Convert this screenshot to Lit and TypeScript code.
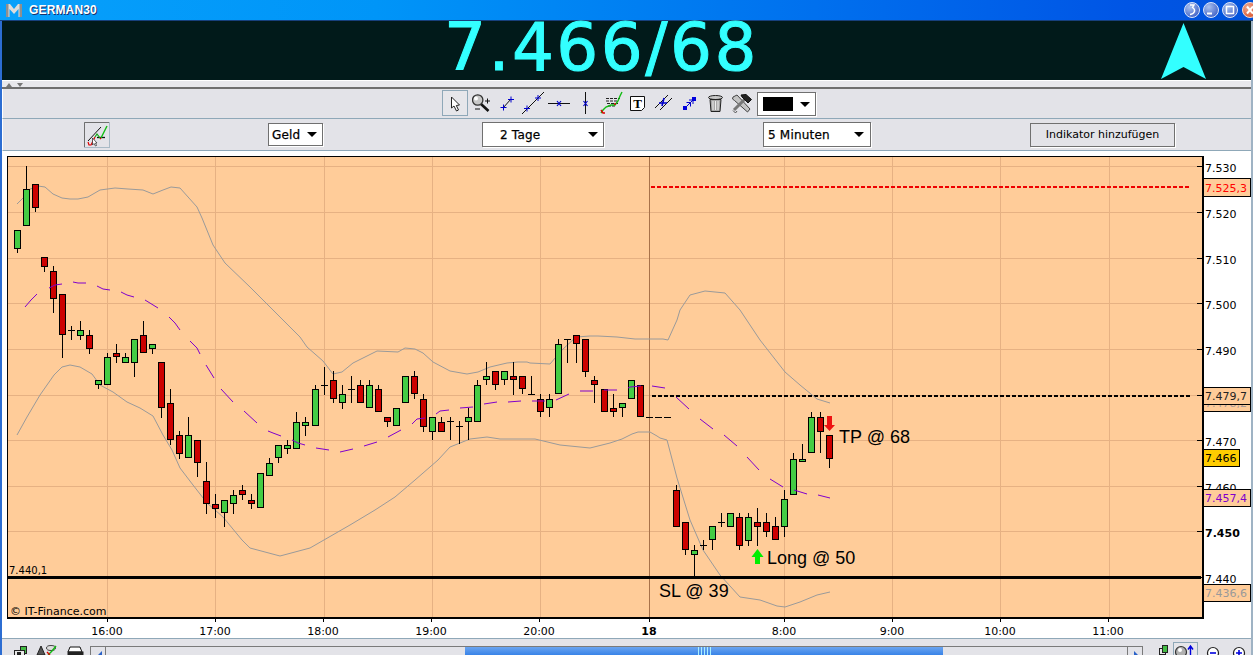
import { LitElement, html, css, svg } from "lit";
import { customElement } from "lit/decorators.js";

type C = [number, "g" | "r" | "d", number, number, number, number];
const CANDLES: C[] = [
  [0,"g",230,249,0,253],[1,"g",189,226,166,0],[2,"r",184,208,0,212],[3,"r",257,267,0,272],
  [4,"r",271,299,266,313],[5,"r",294,335,0,358],[6,"d",330,330,326,340],[7,"g",330,336,321,340],
  [8,"r",335,349,330,354],[9,"g",380,385,0,389],[10,"g",357,385,353,0],[11,"r",353,357,344,363],
  [12,"g",357,363,353,0],[13,"g",339,363,0,377],[14,"r",335,353,321,0],[15,"g",344,349,0,354],
  [16,"r",362,408,0,418],[17,"r",403,440,389,445],[18,"r",435,454,431,459],[19,"g",435,458,417,0],
  [20,"r",440,463,0,477],[21,"r",481,504,462,514],[22,"r",504,509,494,518],[23,"g",500,513,0,527],
  [24,"g",495,504,490,514],[25,"r",490,495,485,500],[26,"r",500,504,494,509],[27,"g",473,508,0,0],
  [28,"g",463,476,458,0],[29,"g",445,458,0,463],[30,"g",445,449,440,454],[31,"g",422,449,412,0],
  [32,"g",422,426,417,436],[33,"g",389,426,385,0],[34,"d",385,385,367,395],[35,"r",380,399,371,403],
  [36,"g",394,403,385,409],[37,"d",389,389,376,403],[38,"r",385,403,380,0],[39,"g",385,408,380,0],
  [40,"r",389,412,385,0],[41,"r",417,422,0,427],[42,"g",408,426,0,0],[43,"g",376,403,0,0],
  [44,"r",376,394,371,399],[45,"r",399,427,394,432],[46,"g",417,432,0,440],[47,"r",422,432,417,0],
  [48,"d",421,421,417,440],[49,"d",426,426,421,444],[50,"g",417,422,408,440],[51,"g",385,422,380,0],
  [52,"g",376,380,362,385],[53,"r",371,385,0,390],[54,"g",371,380,0,385],[55,"r",376,380,362,395],
  [56,"r",376,389,0,394],[57,"d",394,394,376,0],[58,"r",399,412,394,417],[59,"g",399,408,394,417],
  [60,"g",344,394,339,0],[61,"d",339,339,0,363],[62,"r",335,344,0,363],[63,"r",339,372,0,377],
  [64,"r",380,385,376,403],[65,"r",389,412,0,0],[66,"r",408,412,394,417],[67,"g",403,408,0,417],
  [68,"g",380,399,0,0],[69,"r",385,417,0,0],[70,"d",417,417,0,0],[71,"d",417,417,0,0],
  [72,"d",417,417,0,0],[73,"r",490,527,485,0],[74,"r",522,550,0,555],[75,"g",550,555,545,577],
  [76,"d",545,545,540,550],[77,"g",526,540,0,550],[78,"d",522,522,513,527],[79,"g",513,527,0,0],
  [80,"r",517,546,513,550],[81,"g",517,541,513,546],[82,"r",522,527,508,546],[83,"r",522,532,513,537],
  [84,"r",526,540,517,0],[85,"g",499,527,490,537],[86,"g",459,495,453,0],[87,"g",459,462,444,0],
  [88,"g",417,453,412,0],[89,"r",417,432,412,453],[90,"r",435,459,0,468],
];
const cx = (i: number) => (i < 33 ? 17 : i < 65 ? 18 : 19) + 9 * i + 0.5;

const PURPLE = [
  "25,307 31,300 37,294","49,288 55,285 62,284","73,282 78,283 86,283","97,286 103,289 110,290",
  "121,292 127,295 134,297","145,300 158,308","169,317 175,323 180,330","190,341 197,348 200,354",
  "206,365 214,378","221,389 233,402","244,411 257,423","268,431 273,433 281,436","292,440 298,443 305,445",
  "316,448 329,450","340,452 353,449","364,446 377,442","388,437 401,430","412,424 417,419 425,418",
  "436,414 440,411 449,410","460,408 473,407","484,404 497,402","508,402 521,401","532,401 545,401",
  "556,400 569,394","580,391 593,391","604,390 617,390","628,388 630,387 641,386","652,386 665,388",
  "676,397 689,409","700,419 713,429","724,435 737,446","747,457 759,470","770,479 783,487",
  "794,490 807,494","818,495 830,498",
];
const UPPER = "17,204 24,197 28,190 33,188 38,186 45,187 53,194 62,198 70,199 78,199 88,197 100,190 115,188 128,189 143,190 153,194 163,190 171,187 180,188 197,207 202,218 213,245 225,263 250,287 283,320 300,337 307,347 323,361 333,374 342,372 353,363 363,358 377,351 398,352 405,348 415,349 423,353 433,362 450,371 467,374 478,372 490,367 507,363 518,362 527,362 530,363 550,364 562,350 576,337 590,336 598,336 617,337 635,339 663,339 668,340 677,320 680,310 690,295 705,291 725,293 740,310 760,340 785,372 800,385 817,399 830,403";
const LOWER = "17,435 27,417 40,395 54,375 62,367 70,365 80,367 92,374 100,385 113,392 127,402 140,408 153,416 163,435 172,450 180,468 193,485 207,503 223,517 242,540 250,548 280,556 310,548 350,525 375,510 395,497 415,480 438,460 450,447 470,439 487,437 500,439 535,439 560,445 590,448 610,443 622,439 632,434 638,432 650,432 657,436 660,438 667,440 677,478 690,520 703,550 720,575 740,597 760,600 777,606 785,607 800,602 817,595 830,592";

const V_GRID = [107, 215, 324, 432, 540, 784, 892, 1000, 1109];
const H_GRID = [166, 212, 258, 303, 349, 395, 440, 486, 531, 577];
const Y_LABELS: [string, number, boolean][] = [
  ["7.530",166,false],["7.520",212,false],["7.510",258,false],["7.500",303,false],["7.490",349,false],
  ["7.470",440,false],["7.460",486,false],["7.450",531,true],["7.440",577,false],
];
const X_LABELS: [string, number, boolean][] = [
  ["16:00",107,false],["17:00",215,false],["18:00",323,false],["19:00",431,false],["20:00",539,false],
  ["18",649,true],["8:00",784,false],["9:00",892,false],["10:00",1000,false],["11:00",1108,false],
];
const BOXES: [string, number, number, number, string, string][] = [
  ["7.525,3",178,19,47,"#ff0000","#ffcc99"],
  ["7.478,2",392,20,47,"#a99a9a","#ffcc99"],
  ["7.479,7",387,18,47,"#222222","#ffcc99"],
  ["7.466",449,18,36,"#000000","#ffcc00"],
  ["7.457,4",489,18,47,"#8000cc","#ffcc99"],
  ["7.436,6",584,18,47,"#999999","#ffcc99"],
];

const cell = (x: number, w: number, body: unknown) =>
  html`<svg class="cell" width=${w} height="28" viewBox="${x} 90 ${w} 28">${body}</svg>`;
const blueCross = (x: number, y: number) =>
  svg`<path d="M${x - 3} ${y}H${x + 3}M${x} ${y - 3}V${y + 3}" stroke="#0000cc" stroke-width="1" fill="none"/>`;

const TOOLS = [
  cell(442, 30, svg`<rect x="442.5" y="90.5" width="25" height="25" fill="#e6e6ea" stroke="#8fa8b8"/>
    <path d="M451.5 97V108L454 106L456.5 111L458.5 110L456.3 105.5L459.5 105Z" fill="#fff" stroke="#222" stroke-width="1"/>`),
  cell(472, 25, svg`<path d="M481 104L488.5 111" stroke="#111" stroke-width="2.6"/>
    <circle cx="477.7" cy="100" r="5.2" fill="#c8c8c8" stroke="#333" stroke-width="1.3"/>
    <circle cx="476" cy="98.5" r="2" fill="#fff"/>
    <path d="M485 101H490M487.5 98.5V103.5M475 109H480" stroke="#111" fill="none"/>`),
  cell(497, 23, svg`<path d="M503 108L511 99" stroke="#111"/>${blueCross(503.5, 107.5)}${blueCross(511, 99.5)}`),
  cell(520, 26, svg`<path d="M522 114L544 92" stroke="#111"/>${blueCross(527, 108.5)}${blueCross(538, 98)}`),
  cell(546, 28, svg`<path d="M548 103.5H570" stroke="#111"/><path d="M557 101L561 106M561 101L557 106" stroke="#0000cc" stroke-width="1.2"/>`),
  cell(574, 24, svg`<path d="M585.5 92V114" stroke="#111"/><path d="M583.5 101L587.5 106M587.5 101L583.5 106" stroke="#0000cc" stroke-width="1.2"/>`),
  cell(598, 29, svg`<path d="M606 98.5H620M606 101H617M607 103.5H618M608 106H616" stroke="#222" stroke-dasharray="3 1" fill="none"/>
    <path d="M601 113L603 110L606 107L611 105L615 105L618 101L620 96L622 92" stroke="#11bb11" stroke-width="1.4" fill="none"/>
    <path d="M601 110L603 113L605 113" stroke="#dd0000" stroke-width="1.4" fill="none"/><circle cx="615" cy="104" r="1" fill="#dd0000"/>`),
  cell(627, 25, svg`<path d="M630.5 96.5H644.5V107.5L641.5 110.5H630.5Z" fill="#fff" stroke="#111"/>
    <text class="tglyph" x="637.5" y="107.5" text-anchor="middle">T</text>`),
  cell(652, 28, svg`<path d="M655 108L668 95M660 110L672 98" stroke="#111"/>
    <path d="M659 103L667 103M664 98L662 106" stroke="#0000cc" stroke-width="1.6"/>`),
  cell(680, 25, svg`<rect x="683" y="106" width="4" height="4" fill="#0000dd"/><rect x="692" y="97" width="4" height="4" fill="#0000dd"/>
    <path d="M687 106L692 101M686.5 102.5H690.5V106.5M689 100H693V104" stroke="#0000cc" fill="none"/>`),
  cell(705, 25, svg`<ellipse cx="715.5" cy="97.5" rx="7" ry="2" fill="#c8c8c8" stroke="#222"/>
    <path d="M710 99.5L711 111.5H720L721 99.5Z" fill="#a8a8a8" stroke="#222"/>
    <path d="M713 101V110M715.5 101V110M718 101V110" stroke="#eee"/>`),
  cell(730, 27, svg`<path d="M733 97L737 95L750 109L747.5 112L734.5 100.5L732.5 99Z" fill="#c4c4c4" stroke="#444"/>
    <path d="M734 110L746 98" stroke="#777" stroke-width="3"/>
    <path d="M741 95L746 94.5L751.5 99.5L748 103L742 97Z" fill="#222" stroke="#111"/>
    <path d="M733 110.5L735.5 113L737 111" stroke="#555" fill="none"/>`),
];

const CHART_ICON = html`<svg class="rowicon" width="26" height="26" viewBox="84 122 26 26">
  <rect x="84.5" y="122.5" width="25" height="25" fill="#e3e3e8" stroke="#a9bac6"/>
  <path d="M84.5 147V122.5H109" stroke="#6f6f6f" fill="none"/>
  <path d="M88 141L101 127" stroke="#111"/>
  <path d="M97 137.5H105" stroke="#111" stroke-width="1.3"/>
  <path d="M88 142L89 145L91 145L93 141L95 137" stroke="#e00000" stroke-width="1.2" fill="none"/>
  <path d="M95 137L97 134L100 138" stroke="#11aa11" stroke-width="1.2" fill="none"/>
  <path d="M100 138L101 139" stroke="#e00000" stroke-width="1.2"/>
  <path d="M101 138L103 134L105 130L107 126" stroke="#11bb11" stroke-width="1.4" fill="none"/>
  <path d="M92.5 138V145L94 143.5L95.5 146L96.5 145.5L95.5 143H97Z" fill="#fff" stroke="#222" stroke-width=".7"/>
</svg>`;

@customElement("app-root")
export class AppRoot extends LitElement {
  static styles = css`
    :host { display: block; width: 1253px; height: 655px; overflow: hidden; background: #fff;
      font-family: "DejaVu Sans", sans-serif; color: #000; }
    .title { height: 21px; box-sizing: border-box; border-bottom: 1px solid #17407c; display: flex; align-items: center;
      background: linear-gradient(90deg, #07a0fb 0%, #0095f8 30%, #0070ee 65%, #0055e5 90%, #0052dc 100%); }
    .logo { margin-left: 6px; flex: none; }
    .name { margin-left: 7px; font: bold 12px "Liberation Sans", sans-serif; letter-spacing: .15px; color: #fff;
      text-shadow: 1px 1px 0 #17306a; flex: 1; }
    .winbtns { flex: none; display: block; }
    .body { border-left: 2px solid #2c6dd2; border-right: 2px solid #9fb3c4; display: flex; flex-direction: column; height: 634px; }
    .panel { position: relative; height: 59px; background: #011a1a; display: flex; justify-content: center; align-items: flex-start; }
    .price { font-size: 66px; line-height: 54px; letter-spacing: 2.5px; -webkit-text-stroke: 1px #33ffff; color: #33ffff; margin-left: -50px; white-space: nowrap; }
    .arrow { position: absolute; left: 1159px; top: 0; }
    .split { border-top: 1px solid #fff; border-bottom: 2px solid #6f6f6f; background: #e8e8ec; display: flex; gap: 5px;
      padding: 2px 0 0 4px; box-sizing: content-box; height: 4px; }
    .up { width: 0; height: 0; border: 3.5px solid transparent; border-top: 0; border-bottom: 4px solid #777; }
    .down { width: 0; height: 0; border: 3px solid transparent; border-bottom: 0; border-top: 4px solid #777; }
    .tools { background: #e3e3e8; border-bottom: 1px solid #8fa8b8; border-left: 1px solid #fff; display: flex;
      align-items: flex-start; padding: 1px 0 0 439px; box-sizing: content-box; height: 28px; }
    .cell { display: block; flex: none; }
    .tglyph { font: bold 13px "Liberation Serif", serif; fill: #000; }
    .swatchsel { margin-top: 2px; width: 59px; height: 24px; box-sizing: border-box; background: #fff; border: 1px solid #707070;
      box-shadow: 1px 1px 0 #fff; display: flex; align-items: center; justify-content: space-between; padding: 0 5px; flex: none; }
    .swatch { width: 30px; height: 14px; background: #000; }
    .opts { height: 31px; background: #e3e3e8; border-bottom: 1px solid #8fa8b8; border-left: 1px solid #fff; display: flex;
      align-items: center; gap: 159px; padding-left: 81px; }
    .rowicon { display: block; flex: none; margin-right: -1px; }
    .sel { box-sizing: border-box; height: 25px; background: #fff; border: 1px solid #707070; box-shadow: 1px 1px 0 #fff; display: flex;
      align-items: center; justify-content: space-between; font-size: 12px; letter-spacing: .2px; -webkit-text-stroke: .25px #000; padding: 0 5px 0 3px; flex: none; }
    .geld { width: 55px; height: 23px; }
    .tage { width: 122px; padding-left: 17px; }
    .minuten { width: 108px; padding-right: 6px; padding-left: 4px; }
    .tri { width: 0; height: 0; border: 5px solid transparent; border-bottom: 0; border-top: 5px solid #000; }
    .add { box-sizing: border-box; width: 145px; height: 24px; background: #e3e3e8; border: 1px solid #707070; box-shadow: 1px 1px 0 #fff;
      font: 11px "DejaVu Sans", sans-serif; padding: 0; color: #000; flex: none; }
    .chart { display: block; flex: none; background: #fff; }
    .chart text { font: 11px "DejaVu Sans", sans-serif; fill: #000; }
    .chart text.b { font-weight: bold; }
    .chart text.note { font: 18px "Liberation Sans", sans-serif; }
    .chart text.small { font-size: 10px; }
    .bottom { height: 16px; border-top: 1px solid #8fa8b8; background: #e3e3e8; display: flex; overflow: hidden; flex: none; }
    .bottom svg { display: block; flex: none; }
    .scroll { margin-top: 7px; width: 1053px; height: 20px; flex: none; box-sizing: border-box; border-top: 1px solid #7a7a7a; display: flex; }
    .sbtn { width: 16px; flex: none; box-sizing: border-box; border-left: 1px solid #7a7a7a; border-right: 1px solid #7a7a7a; position: relative; }
    .sbtn::after { content: ""; position: absolute; left: 6px; top: 4px; border: 5px solid transparent; }
    .sbtn.l::after { border-left: 0; border-right: 5px solid #2a62c8; }
    .sbtn.r::after { border-right: 0; border-left: 5px solid #2a62c8; }
    .track { flex: 1; display: flex; padding-left: 359px; }
    .thumb { width: 478px; background: linear-gradient(#6aa4f0, #2f7de6 50%, #2a6fd8); display: flex; justify-content: center; gap: 2px; }
    .thumb i { width: 1px; height: 20px; background: #a8f0ff; }
  `;

  private candle(c: C) {
    const [i, k, t, b, wt, wb] = c;
    const x = cx(i);
    const parts = [];
    if (k === "d") {
      const y = t + 0.5;
      parts.push(svg`<path d="M${x - 3.5} ${y}H${x + 3.5}" stroke="#000"/>`);
      if (wt || wb) parts.push(svg`<path d="M${x} ${wt || t}V${wb || t}" stroke="#000"/>`);
      return parts;
    }
    if (wt) parts.push(svg`<path d="M${x} ${wt}V${t}" stroke="#000"/>`);
    if (wb) parts.push(svg`<path d="M${x} ${b}V${wb}" stroke="#000"/>`);
    parts.push(svg`<rect x=${x - 3} y=${t + 0.5} width="6" height=${b - t - 1} fill=${k === "g" ? "#44cc44" : "#cc0000"} stroke="#000"/>`);
    return parts;
  }

  render() {
    return html`
      <div class="title">
        <svg class="logo" width="16" height="13" viewBox="0 0 16 13">
          <path d="M0 0H4L8 5L12 0H16V13H12.5V5L8 10L3.5 5V13H0Z" fill="#dcdcdc"/>
          <path d="M0 0H2.5V13H0ZM13.5 0H16V13H13.5Z" fill="#8f8f8f"/>
        </svg>
        <div class="name">GERMAN30</div>
        <svg class="winbtns" width="73" height="20" viewBox="1180 0 73 20">
          <defs><radialGradient id="bb" cx=".35" cy=".3" r=".8"><stop offset="0" stop-color="#a8c0ee"/><stop offset="1" stop-color="#3a5cc4"/></radialGradient>
          <radialGradient id="rb" cx=".35" cy=".3" r=".8"><stop offset="0" stop-color="#f0a890"/><stop offset="1" stop-color="#d8502a"/></radialGradient></defs>
          <circle cx="1192" cy="10" r="7.5" fill="url(#bb)" stroke="#d8e4fa"/>
          <path d="M1190 5H1194L1192.5 7.5C1196 9.5 1195 14 1190 14.5" fill="none" stroke="#fff" stroke-width="1.4"/>
          <circle cx="1211" cy="10" r="7.5" fill="url(#bb)" stroke="#d8e4fa"/>
          <path d="M1207 13.5H1212" stroke="#fff" stroke-width="2"/>
          <circle cx="1230" cy="10" r="7.5" fill="url(#bb)" stroke="#d8e4fa"/>
          <rect x="1226.5" y="6.5" width="7" height="7" fill="none" stroke="#fff" stroke-width="1.5"/>
          <circle cx="1250" cy="10" r="7.5" fill="url(#rb)" stroke="#f4d8d0"/>
          <path d="M1247 6.5L1253 13.5M1253 6.5L1247 13.5" stroke="#fff" stroke-width="2"/>
        </svg>
      </div>
      <div class="body">
        <div class="panel">
          <div class="price">7.466/68</div>
          <svg class="arrow" width="47" height="59" viewBox="1161 21 47 59">
            <path d="M1183.5 23L1206 79L1183.5 67L1161 79Z" fill="#33ffff"/>
          </svg>
        </div>
        <div class="split"><span class="up"></span><span class="down"></span></div>
        <div class="tools">
          ${TOOLS}
          <div class="swatchsel"><span class="swatch"></span><span class="tri"></span></div>
        </div>
        <div class="opts">
          ${CHART_ICON}
          <div class="sel geld"><span>Geld</span><span class="tri"></span></div>
          <div class="sel tage"><span>2 Tage</span><span class="tri"></span></div>
          <div class="sel minuten"><span>5 Minuten</span><span class="tri"></span></div>
          <button class="add">Indikator hinzufügen</button>
        </div>
        ${this.chart()}
        ${this.bottom()}
      </div>
    `;
  }

  private chart() {
    return html`<svg class="chart" width="1249" height="487" viewBox="2 151 1249 487">
      <rect x="7.5" y="156.5" width="1195" height="461" fill="#ffcc99"/>
      <g stroke="#e6b183" shape-rendering="crispEdges">
        ${V_GRID.map((x) => svg`<path d="M${x + 0.5} 157V617"/>`)}
        ${H_GRID.map((y) => svg`<path d="M8 ${y + 0.5}H1202"/>`)}
      </g>
      <path d="M649.5 157V617" stroke="#a8724a" shape-rendering="crispEdges"/>
      <path d="M651 187H1190" stroke="#ee0000" stroke-width="2" stroke-dasharray="4 2" shape-rendering="crispEdges"/>
      <path d="M652 396H1190" stroke="#000" stroke-width="2" stroke-dasharray="4 2" shape-rendering="crispEdges"/>
      <polyline points=${UPPER} fill="none" stroke="#9a9a9a"/>
      <polyline points=${LOWER} fill="none" stroke="#9a9a9a"/>
      <g shape-rendering="crispEdges">${CANDLES.map((c) => this.candle(c))}</g>
      ${PURPLE.map((p) => svg`<polyline points=${p} fill="none" stroke="#8000cc"/>`)}
      <path d="M8 577.5H1201" stroke="#000" stroke-width="3"/>
      <g stroke="#000" shape-rendering="crispEdges">
        ${H_GRID.map((y) => svg`<path d="M1197 ${y + 0.5}H1203"/>`)}
        ${X_LABELS.map(([, x]) => svg`<path d="M${x + 0.5} 618V622"/>`)}
      </g>
      <path d="M7.5 618V156.5H1203" fill="none" stroke="#000" stroke-width="1.5" shape-rendering="crispEdges"/>
      <path d="M1203 156V619" stroke="#000" stroke-width="2" shape-rendering="crispEdges"/>
      <path d="M7 618H1204" stroke="#000" stroke-width="2" shape-rendering="crispEdges"/>
      ${Y_LABELS.map(([t, y, b]) => svg`<text class=${b ? "b" : ""} x="1205" y=${y + 6}>${t}</text>`)}
      ${X_LABELS.map(([t, x, b]) => svg`<text class=${b ? "b" : ""} x=${x} y="635" text-anchor="middle">${t}</text>`)}
      ${BOXES.map(([t, y, h, w, col, bg]) => svg`
        <rect x="1203.5" y=${y + 0.5} width=${w} height=${h - 1} fill=${bg} stroke="#000" shape-rendering="crispEdges"/>
        <text x="1205" y=${y + h - 5} style="fill:${col}">${t}</text>`)}
      <text class="small" x="9" y="574">7.440,1</text>
      <text x="10" y="615">© IT-Finance.com</text>
      <text class="note" x="839" y="443">TP @ 68</text>
      <text class="note" x="767" y="564">Long @ 50</text>
      <text class="note" x="659" y="597">SL @ 39</text>
      <path d="M757.5 549L763.5 557H760V564H755V557H751.5Z" fill="#00ee00"/>
      <path d="M827 416H832V425H835L829.5 431L824 425H827Z" fill="#ee1111"/>
    </svg>`;
  }

  private bottom() {
    return html`<div class="bottom">
      <svg width="88" height="16" viewBox="2 639 88 16">
        <rect x="20.5" y="646.5" width="6" height="7" fill="#44bb44" stroke="#222"/>
        <rect x="14.5" y="650.5" width="10" height="8" fill="#e8e8e8" stroke="#222"/>
        <rect x="17" y="652" width="4" height="3" fill="#222"/>
        <path d="M41 646L45 655H37Z" fill="#555" stroke="#222"/>
        <ellipse cx="51" cy="648" rx="4.5" ry="2.5" fill="#ddd" stroke="#444"/>
        <path d="M48 655L52 651L56 646" stroke="#11bb11" stroke-width="1.4" fill="none"/>
        <path d="M47 652L50 655" stroke="#e00000" stroke-width="1.4"/>
        <path d="M70 647H80L82 652H68Z" fill="#fff" stroke="#111"/>
        <path d="M67.5 651.5H83.5V656H67.5Z" fill="#222"/>
      </svg>
      <div class="scroll">
        <div class="sbtn l"></div>
        <div class="track"><div class="thumb"><i></i><i></i><i></i><i></i><i></i></div></div>
        <div class="sbtn r"></div>
      </div>
      <svg width="106" height="16" viewBox="1143 639 106 16">
        <rect x="1159.5" y="648.5" width="6" height="6" fill="#e8e8e8" stroke="#222"/>
        <rect x="1162.5" y="645.5" width="5" height="7" fill="#44bb44" stroke="#222"/>
        <rect x="1173.5" y="642.5" width="24" height="16" fill="#e6e6ea" stroke="#8fa8b8"/>
        <circle cx="1181" cy="652" r="5.5" fill="#b0b0b0" stroke="#333" stroke-width="1.2"/>
        <circle cx="1180" cy="650" r="2" fill="#fff"/>
        <path d="M1190.5 656V647M1188 649.5L1190.5 646L1193 649.5" stroke="#0000dd" stroke-width="1.4" fill="none"/>
        <circle cx="1213" cy="653" r="5.5" fill="#fff" stroke="#222" stroke-width="1.2"/>
        <path d="M1210 653H1216" stroke="#0000dd" stroke-width="1.6"/>
        <circle cx="1239" cy="653" r="5.5" fill="#fff" stroke="#222" stroke-width="1.2"/>
        <path d="M1236 653H1242M1239 650V656" stroke="#0000dd" stroke-width="1.6"/>
      </svg>
    </div>`;
  }
}
